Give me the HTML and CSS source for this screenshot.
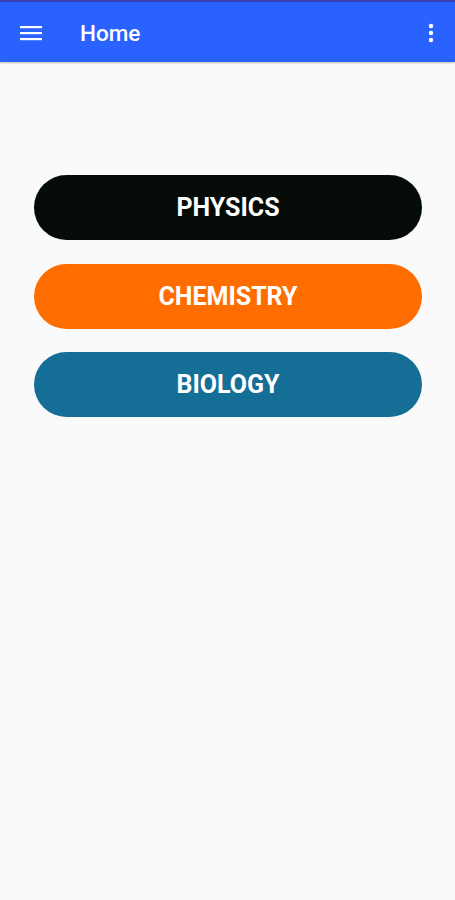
FILE: index.html
```html
<!DOCTYPE html>
<html lang="en">
<head>
    <meta charset="UTF-8">
    <meta name="viewport" content="width=device-width, initial-scale=1.0">
    <title>Home</title>
    <link rel="stylesheet" href="styles.css">
</head>
<body>

    <div class="status-strip"></div>

    <header class="app-bar">
        <button class="icon-button menu-button" aria-label="Menu">
            <svg width="22" height="16" viewBox="0 0 22 16">
                <rect x="0" y="1" width="22" height="2.2" fill="#fff"/>
                <rect x="0" y="7" width="22" height="2.2" fill="#fff"/>
                <rect x="0" y="13" width="22" height="2.2" fill="#fff"/>
            </svg>
        </button>
        <h1 class="title">Home</h1>
        <button class="icon-button more-button" aria-label="More options">
            <svg width="6" height="20" viewBox="0 0 6 20">
                <circle cx="3" cy="3" r="2.2" fill="#fff"/>
                <circle cx="3" cy="10" r="2.2" fill="#fff"/>
                <circle cx="3" cy="17" r="2.2" fill="#fff"/>
            </svg>
        </button>
    </header>

    <main class="subjects">
        <button class="subject physics">PHYSICS</button>
        <button class="subject chemistry">CHEMISTRY</button>
        <button class="subject biology">BIOLOGY</button>
    </main>

</body>
</html>
```

FILE: styles.css
```css
body {
    font-family: 'Roboto', 'Liberation Sans', sans-serif;
    margin: 0;
    background-color: #fafafa;
    min-height: 900px;
}

.status-strip {
    height: 2px;
    background-color: #3a3fb5;
}

.app-bar {
    display: flex;
    align-items: center;
    height: 60px;
    padding: 2px 21px 0 20px;
    box-sizing: border-box;
    background-color: #2962ff;
    box-shadow: 0 1px 2px rgba(0, 0, 0, 0.25);
}

.icon-button {
    display: flex;
    align-items: center;
    justify-content: center;
    padding: 0;
    border: none;
    background: none;
    cursor: pointer;
}

.menu-button {
    width: 22px;
    height: 16px;
}

.title {
    flex: 1;
    margin: 0 0 0 38px;
    color: #fff;
    font-size: 22.5px;
    font-weight: 500;
}

.more-button {
    width: 6px;
    height: 20px;
}

.subjects {
    display: flex;
    flex-direction: column;
    gap: 23.5px;
    padding: 113px 33px 0 34px;
}

.subject {
    height: 65px;
    border: none;
    border-radius: 33px;
    color: #fff;
    font-family: 'Roboto', 'Liberation Sans', sans-serif;
    font-size: 25px;
    font-weight: 700;
    cursor: pointer;
}

.physics {
    background-color: #050c08;
}

.chemistry {
    background-color: #ff6d00;
}

.biology {
    background-color: #146e96;
}
```
